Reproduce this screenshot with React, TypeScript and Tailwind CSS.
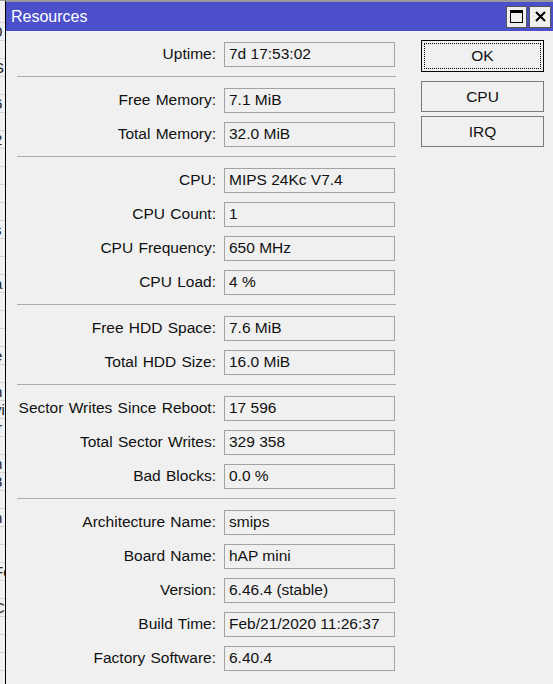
const font = { fontFamily: '"Liberation Sans", Arial, sans-serif' };

type Row = { label: string; value: string };

const groups: Row[][] = [
  [{ label: 'Uptime', value: '7d 17:53:02' }],
  [
    { label: 'Free Memory', value: '7.1 MiB' },
    { label: 'Total Memory', value: '32.0 MiB' },
  ],
  [
    { label: 'CPU', value: 'MIPS 24Kc V7.4' },
    { label: 'CPU Count', value: '1' },
    { label: 'CPU Frequency', value: '650 MHz' },
    { label: 'CPU Load', value: '4 %' },
  ],
  [
    { label: 'Free HDD Space', value: '7.6 MiB' },
    { label: 'Total HDD Size', value: '16.0 MiB' },
  ],
  [
    { label: 'Sector Writes Since Reboot', value: '17 596' },
    { label: 'Total Sector Writes', value: '329 358' },
    { label: 'Bad Blocks', value: '0.0 %' },
  ],
  [
    { label: 'Architecture Name', value: 'smips' },
    { label: 'Board Name', value: 'hAP mini' },
    { label: 'Version', value: '6.46.4 (stable)' },
    { label: 'Build Time', value: 'Feb/21/2020 11:26:37' },
    { label: 'Factory Software', value: '6.40.4' },
  ],
];

// bits of the window lying behind, cut off at the left edge
const behind = ['', '0', '', 'S', '', '6', '', '2', '', '', '', '', 's', '', 't', 'a', '', '', '', 'e', '', 'h', 'vi', 'ir', '', 'n', '3', 't', 'h', '-', '', 'Fc', '-', 'C', '', '', ''];

function Field({ row }: { row: Row }) {
  return (
    <div className="flex h-[34px] items-center">
      <div className="w-[210px] text-right text-[15.5px] text-[#111] [word-spacing:1px]">{row.label}:</div>
      <div className="ml-[8px] flex h-[25px] w-[171px] items-center border border-[#a3a3a3] pl-[4px] text-[15.5px] text-[#111]">
        {row.value}
      </div>
    </div>
  );
}

export default function App() {
  return (
    <div className="flex h-[684px] w-[553px] overflow-hidden bg-[#f0f0f0]" style={font}>
      {/* window behind */}
      <div className="flex w-[5px] flex-col overflow-hidden border-t border-[#a0a0a0] pt-[4px]">
        {behind.map((t, i) => (
          <div key={i} className="h-[18px] shrink-0 border-b border-[#d4d4d4] text-[15px] leading-[18px] text-[#222] whitespace-nowrap">
            <span className="-ml-[6px] block">{t}</span>
          </div>
        ))}
      </div>

      <div className="flex flex-1 flex-col border-l border-black border-t-2 border-t-[#9a9a9a]">
        {/* title bar */}
        <div className="flex h-[29px] items-center bg-[#4b4fc9] pl-[5px] pr-[2px]">
          <span className="flex-1 text-[16px] text-white">Resources</span>
          <div className="flex gap-[2px]">
            <div className="flex h-[22px] w-[21px] items-center justify-center border border-[#555] bg-[#f0f0f0]">
              <div className="h-[13px] w-[13px] border border-black border-t-[3px]" />
            </div>
            <div className="flex h-[22px] w-[22px] items-center justify-center border border-[#555] bg-[#f0f0f0]">
              <svg width="11" height="11" viewBox="0 0 11 11">
                <path d="M1 1L10 10M10 1L1 10" stroke="#000" strokeWidth="2" />
              </svg>
            </div>
          </div>
        </div>

        {/* body */}
        <div className="flex flex-1">
          <div className="flex w-[390px] flex-col pt-[6px]">
            {groups.map((g, gi) => (
              <div key={gi}>
                {gi > 0 && <div className="ml-[11px] mt-[5px] mb-[6px] h-px w-[379px] bg-[#adadad]" />}
                {g.map((r) => (
                  <Field key={r.label} row={r} />
                ))}
              </div>
            ))}
          </div>

          <div className="ml-[25px] flex w-[123px] flex-col pt-[9px]">
            <div className="flex h-[32px] items-center justify-center border border-black p-[2px]">
              <div className="flex h-full w-full items-center justify-center border border-dotted border-black text-[15.5px] text-[#111]">
                OK
              </div>
            </div>
            <div className="mt-[9px] flex h-[31px] items-center justify-center border border-[#7a7a7a] text-[15.5px] text-[#111]">
              CPU
            </div>
            <div className="mt-[4px] flex h-[31px] items-center justify-center border border-[#7a7a7a] text-[15.5px] text-[#111]">
              IRQ
            </div>
          </div>
        </div>
      </div>
    </div>
  );
}
